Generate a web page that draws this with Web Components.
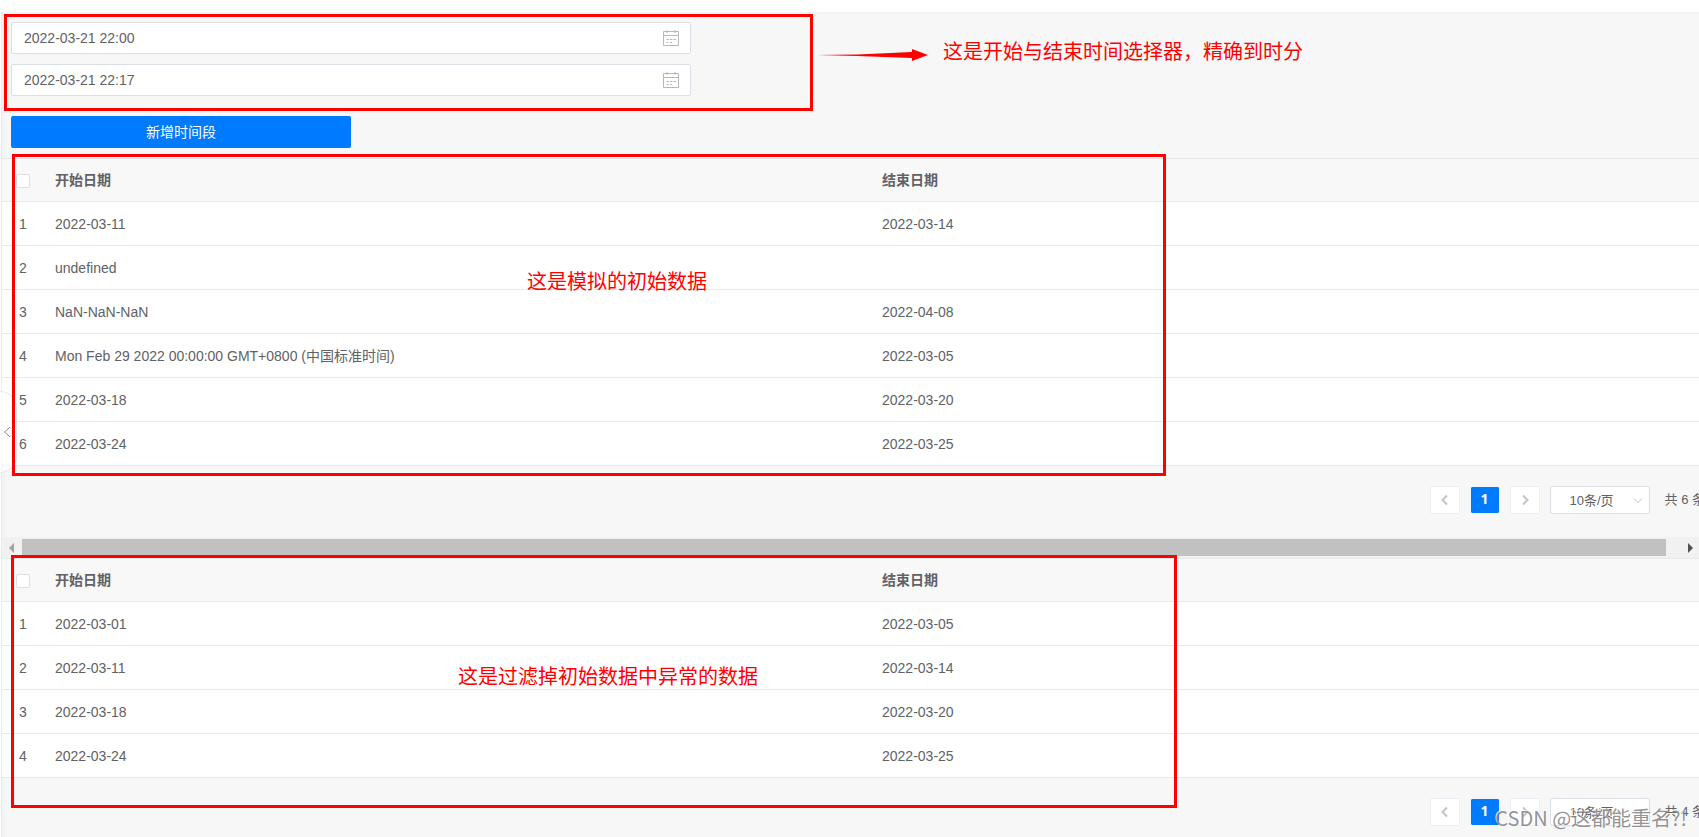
<!DOCTYPE html>
<html lang="zh-CN">
<head>
<meta charset="utf-8">
<title>时间段</title>
<style>
html, body { margin: 0; height: 100%; }
body {
  background: #fff; color: #606266; overflow-x: hidden;
  font: 14px/20px "Liberation Sans", "Noto Sans CJK SC", sans-serif;
}
</style>
</head>
<body>
<period-page></period-page>
<script>
const define = (name, html, setup) => {
  const template = document.createElement('template');
  template.innerHTML = html;
  customElements.define(name, class extends HTMLElement {
    connectedCallback() {
      if (this.shadowRoot) return;
      this.attachShadow({ mode: 'open' }).append(template.content.cloneNode(true));
      if (setup) setup(this, this.shadowRoot);
    }
  });
};

/* Date-time text box with a calendar icon */
define('date-time-field', `
<style>
:host { display: block; }
label {
  display: flex; align-items: center; box-sizing: border-box; height: 32px;
  padding: 0 10px 0 12px; background: #fff; border: 1px solid #dcdfe6; border-radius: 2px;
}
input { flex: 1; min-width: 0; border: 0; padding: 0; outline: 0; background: none; font: inherit; color: inherit; }
svg { width: 18px; height: 18px; fill: none; stroke: #b6b8bb; }
</style>
<label><input type="text">
<svg viewBox="0 0 18 18" aria-hidden="true">
  <path d="M1.5 2.5h15v14h-15z M1.5 6.500h15 M5 1v3 M13 1v3"/>
  <path d="M4.500 10.500h2.500 M8 10.500h2.500 M11.500 10.500h2.500 M4.500 13.500h2 M8 13.500h2"/>
</svg></label>`, (host, root) => {
  const input = root.querySelector('input');
  input.value = host.getAttribute('value');
  input.setAttribute('aria-label', host.getAttribute('label'));
});

define('primary-button', `
<style>
:host { display: block; }
button {
  display: block; width: 100%; height: 32px; border: 0; border-radius: 2px; padding: 0 0 1px;
  background: #007aff; color: #fff; font: inherit;
}
</style>
<button type="button"><slot></slot></button>`);

/* Table of periods: rows are "start|end" separated by semicolons */
define('period-table', `
<style>
:host { display: block; }
table { width: 100%; table-layout: fixed; border-collapse: separate; border-spacing: 0; border-top: 1px solid #e8e9eb; background: #fff; }
th, td { box-sizing: border-box; height: 44px; padding: 0 10px; border-bottom: 1px solid #e8e9eb; text-align: left; white-space: nowrap; }
th { height: 43px; background: #f8f8f9; font-weight: 700; }
th:first-child { width: 43px; padding: 0 0 0 14px; }
td:first-child { padding: 0 0 0 17px; }
input { appearance: none; display: block; box-sizing: border-box; width: 14px; height: 14px; margin: 2px 0 0; background: #fff; border: 1px solid #dcdfe6; border-radius: 2px; }
</style>
<table>
<thead><tr><th><input type="checkbox" aria-label="全选"></th><th>开始日期</th><th>结束日期</th></tr></thead>
<tbody></tbody>
</table>`, (host, root) => {
  const body = root.querySelector('tbody');
  host.getAttribute('rows').split(';').forEach((line, i) => {
    const row = body.insertRow();
    [i + 1, ...line.split('|')].forEach(text => { row.insertCell().textContent = text; });
  });
});

define('page-nav', `
<style>
:host { display: flex; align-items: center; justify-content: flex-end; padding-top: 20px; margin-right: -6px; font-size: 13px; white-space: nowrap; }
button { box-sizing: border-box; width: 30px; height: 28px; padding: 0; margin-right: 10px; border: 1px solid #ebeef5; border-radius: 2px; background: #fff; display: grid; place-items: center; }
.current { background: #007aff; background-clip: padding-box; color: #fff; border-color: #f0f5fc; font: 700 14px/20px "Open Sans", sans-serif; padding-bottom: 2px; }
svg { width: 12px; height: 12px; fill: none; stroke: #c0c4cc; stroke-width: 2; }
.size { display: grid; align-items: center; margin-right: 15px; }
.size > * { grid-area: 1 / 1; }
.size svg { justify-self: end; margin-right: 6px; stroke-width: 1; }
select { appearance: none; box-sizing: border-box; width: 100px; height: 28px; padding: 2px 0 0 19px; border: 1px solid #dcdfe6; border-radius: 3px; background: #fff; color: inherit; font: inherit; }
</style>
<button type="button" aria-label="上一页"><svg viewBox="0 0 12 12"><path d="M8 1.500 3.500 6 8 10.500"/></svg></button>
<button type="button" class="current">1</button>
<button type="button" aria-label="下一页"><svg viewBox="0 0 12 12"><path d="M4 1.500 8.500 6 4 10.500"/></svg></button>
<div class="size"><select aria-label="每页条数"><option>10条/页</option></select>
<svg viewBox="0 0 12 12" aria-hidden="true"><path d="M2 4.500 6 8.500 10 4.500"/></svg></div>
<span>共 <slot></slot> 条</span>`);

define('scroll-strip', `
<style>
:host { display: flex; align-items: center; height: 21px; background: #f1f1f1; }
i { flex: none; border: 5px solid transparent; }
.left { margin: 0 8px 0 2px; border-right-color: #a3a3a3; }
.right { margin: 0 1px 0 22px; border-left-color: #505050; }
.thumb { flex: 1; height: 17px; background: #c1c1c1; }
</style>
<i class="left"></i><div class="thumb"></div><i class="right"></i>`);

/* Red frame laid over a section */
define('red-frame', `
<style>
:host { display: block; position: absolute; box-sizing: border-box; border: 3px solid #f00; pointer-events: none; z-index: 2; }
</style><slot></slot>`);

define('side-handle', `
<style>
:host { display: grid; place-items: center start; position: absolute; box-sizing: border-box; left: 0; top: 391px; width: 17px; height: 82px; border: 1px solid #e9ebef; border-left: 0; border-radius: 0 17px 17px 0; background: #ffffffb0; z-index: 1; }
button { border: 0; padding: 0 0 0 3px; background: none; display: block; }
svg { display: block; width: 8px; height: 12px; fill: none; stroke: #888; }
</style>
<button type="button" aria-label="收起"><svg viewBox="0 0 8 12"><path d="M7 1 1.500 6 7 11"/></svg></button>`);

define('period-page', `
<style>
:host { display: flex; flex-direction: column; position: relative; box-sizing: border-box; min-height: 100%; padding: 12px 0 0 1px; overflow: hidden; }
main { flex: 1; background: #f7f7f7; border-left: 1px solid #e9ebef; box-shadow: inset 6px 0 4px -4px #eff1f6, inset 0 4px 4px -3px #eff1f6; }
section { position: relative; }
.form { display: flex; flex-direction: column; gap: 10px; padding: 10px 9px; }
date-time-field { width: 680px; max-width: 100%; }
primary-button { width: 340px; margin-top: 10px; }
.first { padding-bottom: 23px; }
.last { padding-bottom: 11px; }
.fields { left: 2px; top: 2px; width: 809px; height: 97px; }
.initial { left: 10px; top: -4px; width: 1154px; height: 322px; }
.filtered { left: 9px; top: -3px; width: 1166px; height: 253px; }
.note { position: absolute; white-space: nowrap; color: #f00; font: 20px/30px "Noto Sans CJK SC", sans-serif; z-index: 2; }
.form .note { left: 941px; top: 24px; }
.first .note { left: 525px; top: 108px; }
.last .note { left: 456px; top: 103px; }
.arrow { position: absolute; left: 815px; top: 37px; width: 112px; height: 14px; fill: #f00; }
.mark { position: absolute; right: 12px; bottom: 5px; font: 20px/28px "Noto Sans CJK SC", sans-serif; color: #77777bcc; text-shadow: -1px -1px #ffffffcc; white-space: nowrap; z-index: 3; }
</style>
<main>
  <section class="form">
    <date-time-field label="开始时间" value="2022-03-21 22:00"></date-time-field>
    <date-time-field label="结束时间" value="2022-03-21 22:17"></date-time-field>
    <primary-button>新增时间段</primary-button>
    <red-frame class="fields"></red-frame>
    <svg class="arrow" viewBox="0 0 112 14" aria-hidden="true"><path d="M0 6 40 5.500 95 3V0l16 6-16 6V9L40 7z"/></svg>
    <span class="note">这是开始与结束时间选择器，精确到时分</span>
  </section>
  <section class="first">
    <period-table rows="2022-03-11|2022-03-14;undefined|;NaN-NaN-NaN|2022-04-08;Mon Feb 29 2022 00:00:00 GMT+0800 (中国标准时间)|2022-03-05;2022-03-18|2022-03-20;2022-03-24|2022-03-25"></period-table>
    <page-nav>6</page-nav>
    <red-frame class="initial"></red-frame>
    <span class="note">这是模拟的初始数据</span>
  </section>
  <scroll-strip></scroll-strip>
  <section class="last">
    <period-table rows="2022-03-01|2022-03-05;2022-03-11|2022-03-14;2022-03-18|2022-03-20;2022-03-24|2022-03-25"></period-table>
    <page-nav>4</page-nav>
    <red-frame class="filtered"></red-frame>
    <span class="note">这是过滤掉初始数据中异常的数据</span>
  </section>
</main>
<side-handle></side-handle>
<span class="mark">CSDN @这都能重名?!</span>`);
</script>
</body>
</html>
